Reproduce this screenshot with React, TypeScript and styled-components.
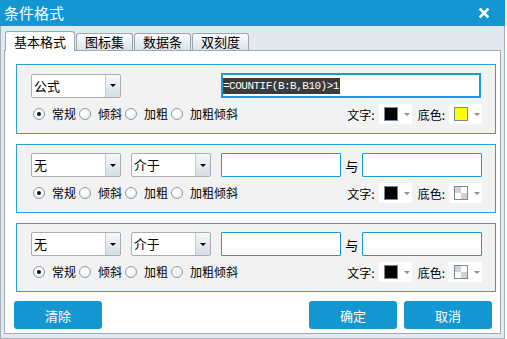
import React from "react";
import styled, { createGlobalStyle } from "styled-components";

const GlobalStyle = createGlobalStyle`
  html, body {
    margin: 0;
    padding: 0;
    background: #ffffff;
  }
  body {
    font-family: "Noto Sans CJK SC", "Noto Sans", sans-serif;
    font-size: 12px;
    color: #000000;
  }
`;

const Window = styled.div`
  width: 505px;
  height: 339px;
  box-sizing: border-box;
  display: flex;
  flex-direction: column;
`;

const TitleBar = styled.div`
  flex: none;
  height: 26px;
  background: #1497d1;
  color: #ffffff;
  display: flex;
  align-items: center;
  justify-content: space-between;
  padding: 0 16px 0 4px;
  font-size: 15px;
  line-height: 26px;
`;

const Body = styled.div`
  flex: 1;
  min-height: 0;
  display: flex;
  flex-direction: column;
  background: #e4e9ef;
  border: 1px solid #a3afbb;
  border-top: none;
  padding: 0 3px 4px 3px;
`;

const TabStrip = styled.div`
  flex: none;
  height: 24px;
  display: flex;
  align-items: flex-end;
  gap: 1px;
  padding-left: 1px;
`;

const Tab = styled.div<{ $active?: boolean }>`
  box-sizing: border-box;
  position: relative;
  z-index: ${(p) => (p.$active ? 2 : 1)};
  width: ${(p) => (p.$active ? 70 : 57)}px;
  height: ${(p) => (p.$active ? 20 : 17)}px;
  margin-bottom: ${(p) => (p.$active ? -1 : 0)}px;
  border: 1px solid #9aa6b2;
  border-bottom: none;
  border-radius: 3px 3px 0 0;
  background: ${(p) =>
    p.$active ? "#ffffff" : "linear-gradient(#fbfcfd, #dde2e8)"};
  display: flex;
  align-items: center;
  justify-content: center;
  font-size: 13px;
  line-height: 16px;
`;

const Panel = styled.div`
  flex: 1;
  display: flex;
  flex-direction: column;
  background: #ffffff;
  border: 1px solid #9ea9b4;
  padding: 13px 4px 0 9px;
`;

const Groups = styled.div`
  display: flex;
  flex-direction: column;
  gap: 10px;
`;

const Group = styled.div`
  box-sizing: border-box;
  width: 480px;
  margin-left: 2px;
  background: #f2f2f2;
  border: 1px solid #2a9fd8;
  padding: 8px 13px 9px 14px;
  display: flex;
  flex-direction: column;
  gap: 6px;
`;

const Row = styled.div`
  display: flex;
  align-items: center;
`;

const Select = styled.div<{ $width: number }>`
  box-sizing: border-box;
  width: ${(p) => p.$width}px;
  height: 24px;
  margin-right: 10px;
  display: flex;
  background: #ffffff;
  border: 1px solid #a7aeb6;
  border-radius: 2px;
  overflow: hidden;
`;

const SelectText = styled.div`
  flex: 1;
  padding-left: 2px;
  font-size: 13px;
  line-height: 22px;
`;

const SelectArrow = styled.div`
  width: 14px;
  border-left: 1px solid #c3c9cf;
  background: linear-gradient(#f7f8fa, #d6dce3);
  display: flex;
  align-items: center;
  justify-content: center;
  &::after {
    content: "";
    border-left: 3px solid transparent;
    border-right: 3px solid transparent;
    border-top: 3px solid #000000;
  }
`;

const FormulaBox = styled.div`
  box-sizing: border-box;
  width: 260px;
  height: 25px;
  margin-left: 90px;
  background: #ffffff;
  border: 2px solid #1a9ad6;
  display: flex;
  align-items: center;
  padding-left: 0;
`;

const Selected = styled.span`
  background: #3b3b3b;
  color: #ffffff;
  font-family: "Liberation Mono", monospace;
  font-size: 11px;
  letter-spacing: -0.5px;
  line-height: 16px;
  padding-right: 1px;
`;

const TextBox = styled.div<{ $width: number }>`
  box-sizing: border-box;
  width: ${(p) => p.$width}px;
  height: 24px;
  background: #ffffff;
  border: 1px solid #1a9ad6;
  border-radius: 1px;
`;

const And = styled.span`
  width: 21px;
  text-align: center;
  font-size: 13px;
`;

const StyleRow = styled.div`
  display: flex;
  align-items: center;
  height: 20px;
  padding-left: 2px;
`;

const RadioItem = styled.label`
  display: flex;
  align-items: center;
  margin-right: 3px;
  font-size: 12px;
  line-height: 16px;
`;

const RadioDot = styled.span<{ $checked?: boolean }>`
  box-sizing: border-box;
  width: 12px;
  height: 12px;
  margin-right: 7px;
  border-radius: 50%;
  border: 1px solid #8f9aa5;
  background: radial-gradient(circle at 40% 35%, #ffffff 30%, #dde2e7 100%);
  display: flex;
  align-items: center;
  justify-content: center;
  &::after {
    content: "";
    display: ${(p) => (p.$checked ? "block" : "none")};
    width: 4px;
    height: 4px;
    border-radius: 50%;
    background: #111111;
  }
`;

const Spacer = styled.div`
  flex: 1;
`;

const ColorLabel = styled.span`
  font-size: 12px;
  margin: 0 4px 0 6px;
`;

const Swatch = styled.div`
  box-sizing: border-box;
  width: 33px;
  height: 20px;
  background: #ffffff;
  display: flex;
  align-items: center;
  padding-left: 5px;
  &::after {
    content: "";
    margin-left: 6px;
    border-left: 3.5px solid transparent;
    border-right: 3.5px solid transparent;
    border-top: 3.5px solid #8a9096;
  }
`;

const Chip = styled.span<{ $color: string }>`
  box-sizing: border-box;
  width: 14px;
  height: 14px;
  border: 1px solid #76889a;
  background: ${(p) =>
    p.$color === "none"
      ? "conic-gradient(#ffffff 0 25%, #d2d2d2 0 50%, #ffffff 0 75%, #d2d2d2 0)"
      : p.$color};
`;

const ButtonRow = styled.div`
  display: flex;
  gap: 7px;
  margin-top: 9px;
  padding-right: 4px;
`;

const Button = styled.button`
  width: 88px;
  height: 28px;
  border: none;
  border-radius: 3px;
  background: #1497d1;
  color: #ffffff;
  font-family: "Noto Sans CJK SC", "Noto Sans", sans-serif;
  font-size: 13px;
  padding: 0;
`;

const CloseIcon = () => (
  <svg width="10" height="10" viewBox="0 0 10 10">
    <path
      d="M1.5 1.5 L8.5 8.5 M8.5 1.5 L1.5 8.5"
      stroke="#ffffff"
      strokeWidth="2.6"
      strokeLinecap="square"
    />
  </svg>
);

const StyleOptions = ({ fill }: { fill: string }) => (
  <StyleRow>
    <RadioItem>
      <RadioDot $checked />
      常规
    </RadioItem>
    <RadioItem>
      <RadioDot />
      倾斜
    </RadioItem>
    <RadioItem>
      <RadioDot />
      加粗
    </RadioItem>
    <RadioItem>
      <RadioDot />
      加粗倾斜
    </RadioItem>
    <Spacer />
    <ColorLabel>文字:</ColorLabel>
    <Swatch>
      <Chip $color="#000000" />
    </Swatch>
    <ColorLabel>底色:</ColorLabel>
    <Swatch>
      <Chip $color={fill} />
    </Swatch>
  </StyleRow>
);

const RangeGroup = () => (
  <Group>
    <Row>
      <Select $width={90}>
        <SelectText>无</SelectText>
        <SelectArrow />
      </Select>
      <Select $width={80}>
        <SelectText>介于</SelectText>
        <SelectArrow />
      </Select>
      <TextBox $width={121} />
      <And>与</And>
      <TextBox $width={120} />
    </Row>
    <StyleOptions fill="none" />
  </Group>
);

const App = () => (
  <>
    <GlobalStyle />
    <Window>
      <TitleBar>
        <span>条件格式</span>
        <CloseIcon />
      </TitleBar>
      <Body>
        <TabStrip>
          <Tab $active>基本格式</Tab>
          <Tab>图标集</Tab>
          <Tab>数据条</Tab>
          <Tab>双刻度</Tab>
        </TabStrip>
        <Panel>
          <Groups>
            <Group>
              <Row>
                <Select $width={90}>
                  <SelectText>公式</SelectText>
                  <SelectArrow />
                </Select>
                <FormulaBox>
                  <Selected>=COUNTIF(B:B,B10)&gt;1</Selected>
                </FormulaBox>
              </Row>
              <StyleOptions fill="#ffff00" />
            </Group>
            <RangeGroup />
            <RangeGroup />
          </Groups>
          <ButtonRow>
            <Button>清除</Button>
            <Spacer />
            <Button>确定</Button>
            <Button>取消</Button>
          </ButtonRow>
        </Panel>
      </Body>
    </Window>
  </>
);

export default App;
